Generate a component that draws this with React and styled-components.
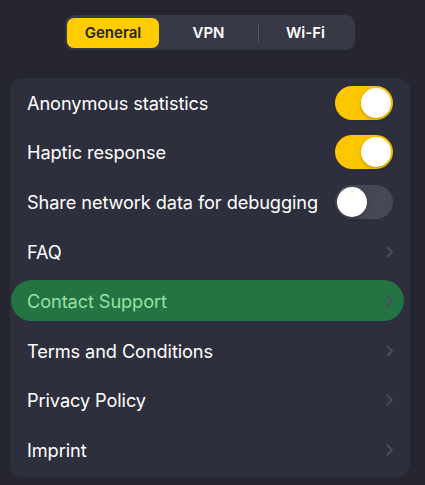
import React from 'react';
import styled, { createGlobalStyle } from 'styled-components';

const GlobalStyle = createGlobalStyle`
    html, body {
        margin: 0;
        padding: 0;
        background: #25262f;
    }
    body {
        font-family: Inter, "Noto Sans", "Liberation Sans", sans-serif;
        -webkit-font-smoothing: antialiased;
    }
`;

// Whole screen
const Screen = styled.div`
    width: 425px;
    height: 485px;
    background: #25262f;
    display: flex;
    flex-direction: column;
    align-items: flex-start;
    padding: 15px 0 0 10px;
    box-sizing: border-box;
`;

// Segmented control at the top
const Segmented = styled.div`
    width: 290px;
    height: 35px;
    margin-left: 55px;
    box-sizing: border-box;
    padding: 2px;
    border-radius: 9px;
    background: #383946;
    display: grid;
    grid-template-columns: 92px 99px 1fr;
    align-items: center;
`;

const Segment = styled.div`
    height: 30px;
    display: flex;
    align-items: center;
    justify-content: center;
    border-radius: 7px;
    font-size: 15px;
    font-weight: 600;
    color: ${({ $active }) => ($active ? '#24252d' : '#ffffff')};
    background: ${({ $active }) => ($active ? '#ffcc00' : 'transparent')};
    position: relative;
    &::before {
        content: '';
        display: ${({ $divider }) => ($divider ? 'block' : 'none')};
        position: absolute;
        left: 0;
        top: 6px;
        bottom: 6px;
        width: 1px;
        background: #55566a;
    }
`;

// Settings list card
const Card = styled.div`
    width: 400px;
    margin-top: 28px;
    border-radius: 12px;
    background: #2e2f3c;
    display: flex;
    flex-direction: column;
    padding: 0 0 2px;
`;

const Row = styled.div`
    height: 49.6px;
    display: flex;
    align-items: center;
    justify-content: space-between;
    padding: 0 17px 0 17px;
    box-sizing: border-box;
    ${({ $highlight }) =>
        $highlight &&
        `
        background: #237343;
        border-radius: 21px;
        height: 41px;
        margin: 4px 6px 4.6px 1px;
        padding: 0 11px 0 16px;
    `}
`;

const Label = styled.span`
    font-size: 18.2px;
    font-weight: 400;
    letter-spacing: -0.1px;
    color: ${({ $highlight }) => ($highlight ? '#98e0a2' : '#ffffff')};
`;

const Toggle = styled.div`
    width: 58px;
    height: 34px;
    border-radius: 17px;
    box-sizing: border-box;
    padding: 2px;
    display: flex;
    justify-content: ${({ $on }) => ($on ? 'flex-end' : 'flex-start')};
    background: ${({ $on }) => ($on ? '#fdc700' : '#474855')};
`;

const Knob = styled.div`
    width: 30px;
    height: 30px;
    border-radius: 50%;
    background: #ffffff;
    box-shadow: 0 2px 4px rgba(0, 0, 0, 0.2);
`;

const Chevron = () => (
    <svg width="8" height="12" viewBox="0 0 8 12" style={{ marginRight: -1 }}>
        <path d="M1.5 1.5 L6 6 L1.5 10.5" fill="none" stroke="#4c4d5b" strokeWidth="2" strokeLinecap="round" strokeLinejoin="round" />
    </svg>
);

const toggles = [
    { label: 'Anonymous statistics', on: true },
    { label: 'Haptic response', on: true },
    { label: 'Share network data for debugging', on: false },
];

const links = ['FAQ', 'Contact Support', 'Terms and Conditions', 'Privacy Policy', 'Imprint'];

const App = () => {
    return (
        <Screen>
            <GlobalStyle />
            <Segmented>
                <Segment $active>General</Segment>
                <Segment>VPN</Segment>
                <Segment $divider>Wi-Fi</Segment>
            </Segmented>
            <Card>
                {toggles.map((t) => (
                    <Row key={t.label}>
                        <Label>{t.label}</Label>
                        <Toggle $on={t.on}>
                            <Knob />
                        </Toggle>
                    </Row>
                ))}
                {links.map((l) => {
                    const hl = l === 'Contact Support';
                    return (
                        <Row key={l} $highlight={hl}>
                            <Label $highlight={hl}>{l}</Label>
                            <Chevron />
                        </Row>
                    );
                })}
            </Card>
        </Screen>
    );
};

export default App;
